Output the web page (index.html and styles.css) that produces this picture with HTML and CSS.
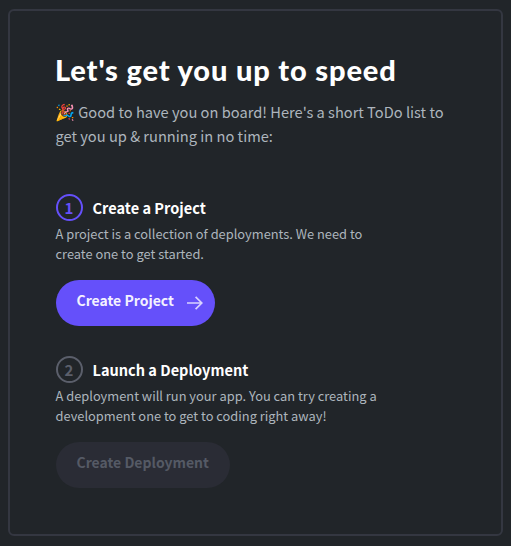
FILE: index.html
```html
<!DOCTYPE html>
<html lang="en">
<head>
<meta charset="utf-8">
<title>Getting started</title>
<link rel="stylesheet" href="styles.css">
</head>
<body>
<main class="card">
  <h1 class="title">Let's get you up to speed</h1>
  <p class="intro"><span class="emoji">🎉</span> Good to have you on board! Here's a short ToDo list to<br>get you up &amp; running in no time:</p>
  <section class="step">
    <div class="step-head"><span class="num">1</span><h2 class="step-title">Create a Project</h2></div>
    <p class="desc">A project is a collection of deployments. We need to<br>create one to get started.</p>
    <button class="btn btn-project"><span class="label">Create Project</span><svg class="arrow" width="18" height="16" viewBox="0 0 18 16" fill="none" stroke="currentColor" stroke-width="1.7"><path d="M1 8H16M9.6 1.8L15.8 8L9.6 14.2"/></svg></button>
  </section>
  <section class="step step-later">
    <div class="step-head"><span class="num num-idle">2</span><h2 class="step-title launch">Launch a Deployment</h2></div>
    <p class="desc">A deployment will run your app. You can try creating a<br>development one to get to coding right away!</p>
    <button class="btn btn-deploy" disabled><span class="label">Create Deployment</span></button>
  </section>
</main>
</body>
</html>
```
FILE: styles.css
```css
* { box-sizing: border-box; }
body {
  margin: 0;
  padding: 9px 8px 10px;
  height: 546px;
  background: #212529;
  font-family: "Noto Sans CJK SC", "Noto Sans", sans-serif;
  color: #adb5bd;
}
.card {
  height: 527px;
  border: 2px solid #343741;
  border-radius: 6px;
  padding: 41px 0 0 46px;
}
h1, h2, p { margin: 0; white-space: nowrap; }
.title {
  margin-left: -1px;
  font: 900 29px/36px Lato, sans-serif;
  letter-spacing: 0.85px;
  color: #fff;
}
.intro {
  margin-top: 12px;
  margin-left: -0.5px;
  font-size: 14.65px;
  line-height: 24px;
}
.emoji { margin-left: -0.5px; font-size: 16px; line-height: 1; }
.step { margin-top: 46px; }
.step-later { margin-top: 30px; }
.step-head { display: flex; align-items: flex-start; gap: 10px; height: 28px; }
.num {
  width: 27px;
  height: 27px;
  border: 2px solid #6550fa;
  border-radius: 50%;
  color: #6550fa;
  font-size: 15px;
  font-weight: 700;
  line-height: 23px;
  text-align: center;
  padding-right: 1px;
}
.num-idle { border-color: #5b5f6b; color: #5b5f6b; }
.step-title { margin-left: -0.5px; font-size: 14.55px; line-height: 20px; font-weight: 700; color: #fff; padding-top: 4px; }
.desc { margin: 2px 0 0 -0.5px; font-size: 12.85px; line-height: 20px; }
.btn {
  display: flex;
  align-items: center;
  margin-top: 16px;
  height: 46px;
  padding: 0 0 0 20.5px;
  border: 0;
  border-radius: 23px;
  background: #6550fa;
  color: #f3f1ff;
  font: 700 13.98px/20px "Noto Sans CJK SC", "Noto Sans", sans-serif;
}
.label { padding-bottom: 6px; white-space: nowrap; }
.btn-project { width: 159px; }
.btn-deploy { width: 174px; background: #2a2c35; color: #555a65; }
.arrow { margin-left: 12px; color: #d8d2ff; }
```
